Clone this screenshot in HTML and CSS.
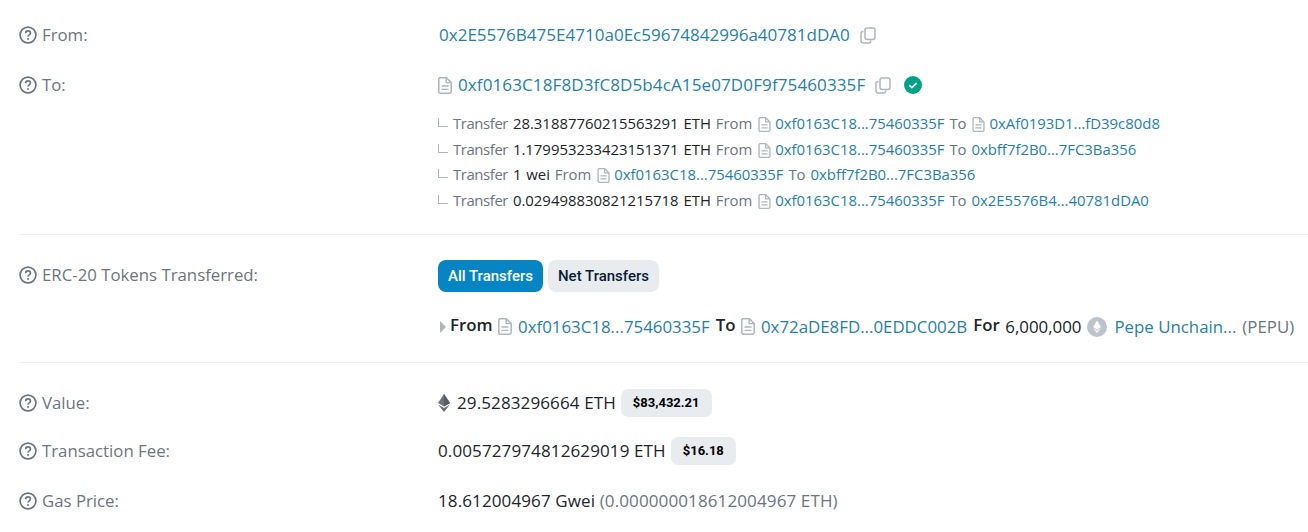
FILE: index.html

```html
<!DOCTYPE html>
<html>
<head>
  <meta charset="UTF-8">
  <title>Transaction Details</title>
  <link rel="stylesheet" href="styles.css">
</head>
<body>

<svg class="defs" width="0" height="0">
  <symbol id="q" viewBox="0 0 18 18">
    <circle cx="9" cy="9" r="7.9" fill="none" stroke="currentColor" stroke-width="1.7"/>
    <path d="M6.6 7.2c0-1.4 1.1-2.3 2.5-2.3s2.4.9 2.4 2.1c0 1.8-2.4 1.9-2.5 3.6" fill="none" stroke="currentColor" stroke-width="1.6"/>
    <circle cx="9" cy="13" r="1" fill="currentColor"/>
  </symbol>
  <symbol id="doc" viewBox="0 0 14 17">
    <path d="M1.8.8h6.6l4.8 4.8v9a1.6 1.6 0 0 1-1.6 1.6H1.8a1.6 1.6 0 0 1-1-1.6V2.4A1.6 1.6 0 0 1 1.8.8z" fill="none" stroke="currentColor" stroke-width="1.5"/>
    <path d="M8.2 1v4.6h4.8M3.5 9h7M3.5 12.4h7" fill="none" stroke="currentColor" stroke-width="1.4"/>
  </symbol>
  <symbol id="copy" viewBox="0 0 16 17">
    <rect x="5" y="1" width="10" height="11.5" rx="2.2" fill="none" stroke="currentColor" stroke-width="1.5"/>
    <path d="M3.4 4.4H3A2.2 2.2 0 0 0 1 6.600V14a2.2 2.2 0 0 0 2 2h5.500a2.200 2.200 0 0 0 2.200-2v-.4" fill="none" stroke="currentColor" stroke-width="1.5"/>
  </symbol>
</svg>

<div class="row row-from">
  <div class="label"><svg class="q"><use href="#q"/></svg>From:</div>
  <div class="value line"><a class="addr-first">0x2E5576B475E4710a0Ec59674842996a40781dDA0</a><svg class="copy"><use href="#copy"/></svg></div>
</div>

<div class="row row-to">
  <div class="label"><svg class="q"><use href="#q"/></svg>To:</div>
  <div class="value">
    <div class="line">
      <svg class="doc"><use href="#doc"/></svg><a class="addr-to">0xf0163C18F8D3fC8D5b4cA15e07D0F9f75460335F</a><svg class="copy"><use href="#copy"/></svg>
      <svg class="check" viewBox="0 0 18 18"><circle cx="9" cy="9" r="9" fill="#00a186"/><path d="M5.4 9.300l2.500 2.300 4.700-4.500" fill="none" stroke="#fff" stroke-width="1.700"/></svg>
    </div>
    <ul class="transfers">
      <li><i class="elbow"></i><span class="muted tr">Transfer</span> 28.31887760215563291 ETH <span class="muted">From</span> <svg class="doc sm"><use href="#doc"/></svg><a>0xf0163C18...75460335F</a> <span class="muted">To</span> <svg class="doc sm"><use href="#doc"/></svg><a>0xAf0193D1...fD39c80d8</a></li>
      <li><i class="elbow"></i><span class="muted tr">Transfer</span> 1.179953233423151371 ETH <span class="muted">From</span> <svg class="doc sm"><use href="#doc"/></svg><a>0xf0163C18...75460335F</a> <span class="muted">To</span> <a>0xbff7f2B0...7FC3Ba356</a></li>
      <li><i class="elbow"></i><span class="muted tr">Transfer</span> 1 wei <span class="muted">From</span> <svg class="doc sm"><use href="#doc"/></svg><a>0xf0163C18...75460335F</a> <span class="muted">To</span> <a>0xbff7f2B0...7FC3Ba356</a></li>
      <li><i class="elbow"></i><span class="muted tr">Transfer</span> 0.029498830821215718 ETH <span class="muted">From</span> <svg class="doc sm"><use href="#doc"/></svg><a>0xf0163C18...75460335F</a> <span class="muted">To</span> <a>0x2E5576B4...40781dDA0</a></li>
    </ul>
  </div>
</div>

<hr>

<div class="row row-tokens">
  <div class="label"><svg class="q"><use href="#q"/></svg>ERC-20 Tokens Transferred:</div>
  <div class="value">
    <div class="tabs"><button class="tab active">All Transfers</button><button class="tab">Net Transfers</button></div>
    <div class="token-line">
      <i class="caret"></i><b>From</b><svg class="doc"><use href="#doc"/></svg><a>0xf0163C18...75460335F</a><b>To</b><svg class="doc"><use href="#doc"/></svg><a>0x72aDE8FD...0EDDC002B</a><b>For</b><span>6,000,000</span>
      <svg class="coin" viewBox="0 0 20 20"><circle cx="10" cy="10" r="10" fill="#bcc3cf"/><path d="M10 3.500l4 6.500-4 2.400L6 10z" fill="#fff"/><path d="M10 13.300l4-2.400-4 5.600-4-5.600z" fill="#eef0f3"/></svg>
      <a>Pepe Unchain...</a><span class="muted">(PEPU)</span>
    </div>
  </div>
</div>

<hr class="hr-tokens">

<div class="row row-value">
  <div class="label"><svg class="q"><use href="#q"/></svg>Value:</div>
  <div class="value line">
    <svg class="eth" viewBox="0 0 12 18"><path d="M6 0l6 9-6 3.500L0 9z" fill="#6c757e"/><path d="M6 0l6 9-6 3.500z" fill="#565d65"/><path d="M0 10.400l6 3.500 6-3.500L6 18z" fill="#6c757e"/></svg>
    <span class="amount">29.5283296664 ETH</span><span class="chip">$83,432.21</span>
  </div>
</div>

<div class="row row-fee">
  <div class="label"><svg class="q"><use href="#q"/></svg>Transaction Fee:</div>
  <div class="value line"><span class="amount">0.005727974812629019 ETH</span><span class="chip">$16.18</span></div>
</div>

<div class="row row-gas">
  <div class="label"><svg class="q"><use href="#q"/></svg>Gas Price:</div>
  <div class="value line"><span class="amount">18.612004967 Gwei <span class="muted">(0.000000018612004967 ETH)</span></span></div>
</div>

</body>
</html>
```

FILE: styles.css

```css
html, body {
  height: 100%;
}
body {
  margin: 0;
  padding: 23px 0 0 19px;
  box-sizing: border-box;
  overflow: hidden;
  background: #fff;
  color: #212529;
  font-family: "Open Sans", "Noto Sans", sans-serif;
  font-size: 17.05px;
  line-height: 24px;
}
.defs { position: absolute; }
a { color: #1f7fae; }
.muted { color: #6c757e; }
.row { display: flex; }
.label {
  width: 419px;
  flex: none;
  display: flex;
  align-items: center;
  height: 24px;
  color: #6c757e;
  font-size: 16.8px;
}
.q {
  width: 18px;
  height: 18px;
  margin-right: 5px;
  color: #6c757e;
}
.line {
  display: flex;
  align-items: center;
  height: 24px;
}
.doc {
  width: 14px;
  height: 17px;
  margin-right: 6px;
  color: #adb5bd;
}
.doc.sm { margin: 0 4px 0 1px; vertical-align: -3px; width: 13px; height: 15px; }
.copy {
  width: 16px;
  height: 17px;
  margin-left: 10px;
  color: #adb5bd;
}
.check { width: 18px; height: 18px; margin-left: 13px; }
.addr-first { margin-left: 1px; }
.addr-to { letter-spacing: 0.1px; }
.row-to { margin-top: 26px; }
.transfers {
  list-style: none;
  margin: 14px 0 0;
  padding: 0;
  font-size: 14.9px;
  line-height: 25.7px;
  word-spacing: 1px;
}
.transfers li { white-space: nowrap; }
.tr { letter-spacing: -0.4px; }
.elbow {
  display: inline-block;
  width: 9px;
  height: 8px;
  margin-right: 5px;
  border-left: 1.500px solid #adb5bd;
  border-bottom: 1.500px solid #adb5bd;
  vertical-align: 2px;
}
hr {
  margin: 20px 0 0;
  border: 0;
  border-top: 1px solid #e9ecef;
}
hr.hr-tokens { margin-top: 23px; }
.row-tokens { margin-top: 25px; }
.row-tokens .label { margin-top: 3px; }
.tabs { display: flex; gap: 5px; }
.tab {
  height: 32px;
  padding: 0 10px;
  border: 0;
  border-radius: 8px;
  background: #e9ecef;
  color: #081d35;
  font-family: Roboto, sans-serif;
  font-size: 15px;
  font-weight: 500;
}
.tab.active { background: #0784c3; color: #fff; }
.token-line {
  display: flex;
  align-items: center;
  height: 24px;
  margin-top: 23px;
  font-size: 16.85px;
  white-space: nowrap;
}
.token-line b { font-weight: 600; color: #212529; margin: 0 5.5px 3px 0; }
.token-line a { margin-right: 6px; }
.token-line span { margin-right: 6px; }
.caret {
  width: 0;
  height: 0;
  margin: 0 4px 0 2px;
  border-left: 6px solid #adb5bd;
  border-top: 6px solid transparent;
  border-bottom: 6px solid transparent;
}
.coin { width: 20px; height: 20px; margin-right: 7px; }
.row-value { margin-top: 28px; }
.row-fee { margin-top: 24px; }
.row-gas { margin-top: 26px; }
.eth { width: 12px; height: 18px; margin-right: 7px; }
.amount { white-space: nowrap; letter-spacing: 0.1px; }
.chip {
  margin-left: 5px;
  padding: 0 12px;
  height: 28px;
  line-height: 28px;
  border-radius: 7px;
  background: #e9ecef;
  color: #000;
  font-family: Roboto, sans-serif;
  font-size: 13px;
  font-weight: 700;
}
```
